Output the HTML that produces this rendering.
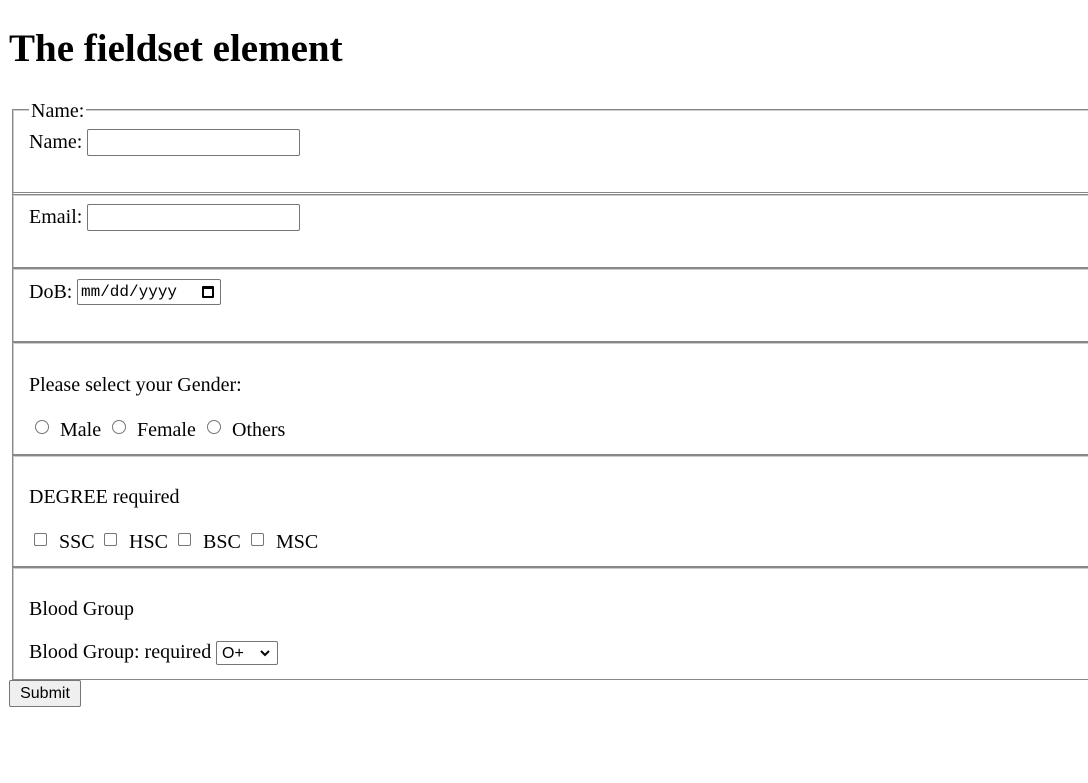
<!DOCTYPE html>
<html><head><style>
*{box-sizing:border-box}
body{margin:0;width:1088px;height:783px;overflow:hidden;background:#fff;font-family:"Liberation Serif",serif;font-size:20px;color:#000;position:relative}
.a{position:absolute;white-space:nowrap;line-height:1}
.fs{position:absolute;left:12px;width:1100px;border-top:1px solid #888;border-left:1px solid #888}
.fs::before{content:"";position:absolute;left:0;right:0;top:0;bottom:0;border-top:1px solid #ccc;border-left:1px solid #ccc}
.hl{position:absolute;left:12px;width:1100px;height:1px;background:#888}
.in{position:absolute;border:1px solid #767676;border-radius:2px;background:#fff}
.r{position:absolute;width:14px;height:14px;border:1px solid #767676;border-radius:50%}
.c{position:absolute;width:13px;height:13px;border:1px solid #767676;border-radius:2px}
</style></head><body>
<div class="a" style="left:9px;top:29px;font-size:39px;font-weight:bold">The fieldset element</div>

<div class="fs" style="top:109px;height:86px"></div>
<div class="a" style="left:29px;top:101px;background:#fff;padding:0 2px">Name:</div>
<div class="a" style="left:29px;top:132px">Name:</div>
<div class="in" style="left:87px;top:129px;width:213px;height:27px"></div>

<div class="hl" style="top:192px"></div>
<div class="fs" style="top:194px;height:76px"></div>
<div class="a" style="left:29px;top:207px">Email:</div>
<div class="in" style="left:87px;top:204px;width:213px;height:27px"></div>

<div class="hl" style="top:267px"></div>
<div class="fs" style="top:268px;height:76px"></div>
<div class="a" style="left:29px;top:282px">DoB:</div>
<div class="in" style="left:77px;top:279px;width:144px;height:26px"></div>
<div class="a" style="left:81px;top:284px;font-family:'Liberation Mono',monospace;font-size:16px">mm/dd/yyyy</div>
<div style="position:absolute;left:202px;top:286px;width:12px;height:12px;border:2px solid #000;border-top-width:3px;border-radius:1px"></div>

<div class="hl" style="top:341px"></div>
<div class="fs" style="top:342px;height:116px"></div>
<div class="a" style="left:29px;top:375px">Please select your Gender:</div>
<div class="r" style="left:35px;top:420px"></div><div class="a" style="left:60px;top:420px">Male</div>
<div class="r" style="left:112px;top:420px"></div><div class="a" style="left:137px;top:420px">Female</div>
<div class="r" style="left:207px;top:420px"></div><div class="a" style="left:232px;top:420px">Others</div>

<div class="hl" style="top:454px"></div>
<div class="fs" style="top:455px;height:115px"></div>
<div class="a" style="left:29px;top:487px">DEGREE required</div>
<div class="c" style="left:34px;top:533px"></div><div class="a" style="left:59px;top:532px">SSC</div>
<div class="c" style="left:104px;top:533px"></div><div class="a" style="left:129px;top:532px">HSC</div>
<div class="c" style="left:178px;top:533px"></div><div class="a" style="left:203px;top:532px">BSC</div>
<div class="c" style="left:251px;top:533px"></div><div class="a" style="left:276px;top:532px">MSC</div>

<div class="hl" style="top:566px"></div>
<div class="fs" style="top:567px;height:113px;border-bottom:1px solid #888"></div>
<div class="a" style="left:29px;top:599px">Blood Group</div>
<div class="a" style="left:29px;top:642px">Blood Group: required</div>
<div class="in" style="left:216px;top:641px;width:62px;height:24px"></div>
<div class="a" style="left:222px;top:646px;font-family:'Liberation Sans',sans-serif;font-size:16px">O+</div>
<svg style="position:absolute;left:259px;top:648px" width="12" height="10"><path d="M2 3l4 4 4-4" fill="none" stroke="#000" stroke-width="2"/></svg>

<div style="position:absolute;left:9px;top:680px;width:72px;height:27px;border:1px solid #767676;border-radius:2px;background:#efefef;font-family:'Liberation Sans',sans-serif;font-size:16px;text-align:center;line-height:25px">Submit</div>
</body></html>
